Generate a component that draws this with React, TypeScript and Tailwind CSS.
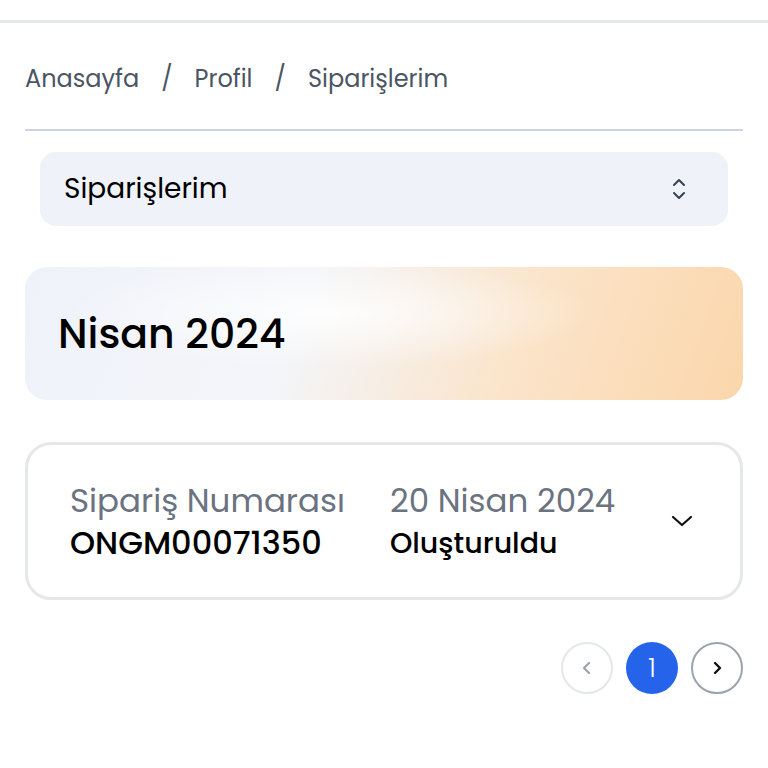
import React from "react";

const font = { fontFamily: '"Poppins", "Open Sans", "Noto Sans", sans-serif' };

function UpDown() {
  return (
    <svg width="18" height="26" viewBox="0 0 18 26" fill="none" stroke="#374151" strokeWidth="2" strokeLinecap="round" strokeLinejoin="round">
      <path d="M4 9 L9 4 L14 9" />
      <path d="M4 17 L9 22 L14 17" />
    </svg>
  );
}

export default function App() {
  return (
    <div className="min-h-[768px] w-[768px] bg-white" style={font}>
      <div className="h-[20px] bg-white" />
      <div className="h-[3px] bg-[#e5e7eb]" />
      <div className="px-[25px]">
        <nav className="flex items-center h-[106px] pt-[6px] text-[24px] text-[#4b5563]">
          <span>Anasayfa</span>
          <span className="mx-[22px]">/</span>
          <span>Profil</span>
          <span className="mx-[22px]">/</span>
          <span>Siparişlerim</span>
        </nav>
        <div className="h-[2px] bg-[#cbd5e1]" />
        <div className="px-[15px] pt-[21px]">
          <div className="flex items-center justify-between h-[74px] rounded-[16px] bg-[#eff2f9] pl-[24px] pr-[40px]">
            <span className="text-[28px] text-black">Siparişlerim</span>
            <UpDown />
          </div>
        </div>
        <div className="mt-[41px] h-[133px] rounded-[22px] flex items-center pl-[33px] bg-[radial-gradient(ellipse_at_42%_35%,rgba(255,255,255,0.85)_0%,rgba(255,255,255,0)_45%),linear-gradient(110deg,#eff2fa_0%,#f3f5f9_38%,#fbe4ca_68%,#fbd6ab_100%)]">
          <span className="text-[41px] font-medium text-black">Nisan 2024</span>
        </div>
        <div className="mt-[42px] h-[158px] rounded-[26px] border-[3px] border-[#e5e7eb] flex items-center pl-[42px] pr-[46px]">
          <div className="flex flex-col w-[320px]">
            <span className="text-[32.5px] text-[#6b7280] leading-[44px]">Sipariş Numarası</span>
            <span className="text-[32px] font-medium text-black leading-[40px]">ONGM00071350</span>
          </div>
          <div className="flex flex-col flex-1">
            <span className="text-[32.5px] text-[#6b7280] leading-[44px]">20 Nisan 2024</span>
            <span className="text-[28.5px] font-medium text-black leading-[40px]">Oluşturuldu</span>
          </div>
          <svg width="24" height="16" viewBox="0 0 24 16" fill="none" stroke="#111" strokeWidth="2.2" strokeLinecap="round" strokeLinejoin="round">
            <path d="M3 4 L12 12 L21 4" />
          </svg>
        </div>
        <div className="mt-[42px] flex justify-end gap-[13px]">
          <button className="w-[52px] h-[52px] rounded-full border-2 border-[#e5e7eb] flex items-center justify-center">
            <svg width="14" height="16" viewBox="0 0 14 16" fill="none" stroke="#9ca3af" strokeWidth="2.2" strokeLinecap="round" strokeLinejoin="round">
              <path d="M9 3 L4 8 L9 13" />
            </svg>
          </button>
          <button className="w-[52px] h-[52px] rounded-full bg-[#2563eb] text-white text-[26px] font-light flex items-center justify-center">1</button>
          <button className="w-[52px] h-[52px] rounded-full border-2 border-[#9ca3af] flex items-center justify-center">
            <svg width="14" height="16" viewBox="0 0 14 16" fill="none" stroke="#111" strokeWidth="2.4" strokeLinecap="round" strokeLinejoin="round">
              <path d="M5 3 L10 8 L5 13" />
            </svg>
          </button>
        </div>
      </div>
    </div>
  );
}
